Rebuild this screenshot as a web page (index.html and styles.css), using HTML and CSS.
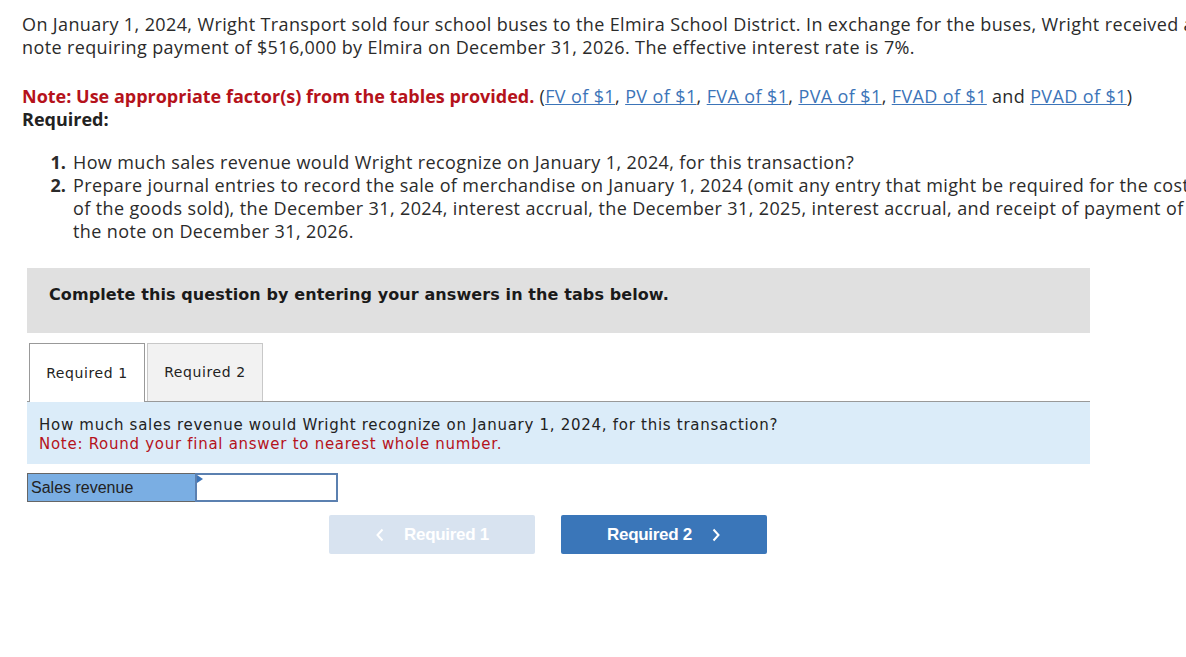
FILE: index.html
```html
<!DOCTYPE html>
<html>
<head>
<meta charset="utf-8">
<link rel="stylesheet" href="styles.css">
</head>
<body>
<div class="page">
  <p class="intro">On January 1, 2024, Wright Transport sold four school buses to the Elmira School District. In exchange for the buses, Wright received a note requiring payment of $516,000 by Elmira on December 31, 2026. The effective interest rate is 7%.</p>
  <p class="note"><span class="red">Note: Use appropriate factor(s) from the tables provided.</span> (<a href="#">FV of $1</a>, <a href="#">PV of $1</a>, <a href="#">FVA of $1</a>, <a href="#">PVA of $1</a>, <a href="#">FVAD of $1</a> and <a href="#">PVAD of $1</a>)<br><b>Required:</b></p>
  <ol class="reqs">
    <li><span class="num">1.</span><span>How much sales revenue would Wright recognize on January 1, 2024, for this transaction?</span></li>
    <li><span class="num">2.</span><span>Prepare journal entries to record the sale of merchandise on January 1, 2024 (omit any entry that might be required for the cost of the goods sold), the December 31, 2024, interest accrual, the December 31, 2025, interest accrual, and receipt of payment of the note on December 31, 2026.</span></li>
  </ol>
  <div class="widget">
    <div class="banner">Complete this question by entering your answers in the tabs below.</div>
    <div class="tabs">
      <div class="tab active">Required 1</div>
      <div class="tab">Required 2</div>
    </div>
    <div class="panel">
      <div>How much sales revenue would Wright recognize on January 1, 2024, for this transaction?</div>
      <div class="pnote">Note: Round your final answer to nearest whole number.</div>
    </div>
    <div class="answer">
      <div class="label">Sales revenue</div>
      <div class="input"></div>
    </div>
    <div class="nav">
      <button class="btn prev"><svg width="10" height="14" viewBox="0 0 10 14"><path d="M7.5 1.5 L2.5 7 L7.5 12.5" fill="none" stroke="#fff" stroke-width="2"/></svg>Required 1</button>
      <button class="btn next">Required 2<svg width="10" height="14" viewBox="0 0 10 14"><path d="M2.5 1.5 L7.5 7 L2.5 12.5" fill="none" stroke="#fff" stroke-width="2"/></svg></button>
    </div>
  </div>
</div>
</body>
</html>
```
FILE: styles.css
```css
html, body { margin: 0; padding: 0; background: #fff; overflow: hidden; }
.page {
  width: 1176px;
  padding: 13px 0 0 22px;
  font-family: "Open Sans", "Lato", sans-serif;
  font-size: 18px;
  line-height: 23px;
  color: #2b2b2b;
  letter-spacing: 0.38px;
}
.intro { margin: 0 0 26px; }
.note { margin: 0; }
.red { color: #b5121b; font-weight: bold; letter-spacing: 0; }
.note a { color: #3c74b8; text-decoration: underline; }
.note b { color: #222; letter-spacing: 0; }
.reqs { list-style: none; margin: 20px 0 0; padding: 0 0 0 22px; }
.reqs li { display: flex; }
.reqs .num { font-weight: bold; width: 22px; flex: none; text-align: right; margin-right: 7px; letter-spacing: 0; }
.widget { width: 1063px; margin: 25px 0 0 5px; font-family: "DejaVu Sans", Verdana, sans-serif; letter-spacing: 0; }
.banner {
  background: #e0e0e0;
  height: 65px;
  box-sizing: border-box;
  padding: 17px 0 0 22px;
  font-weight: bold; font-size: 16px; line-height: 20px; color: #1a1a1a;
  letter-spacing: 0.1px;
}
.tabs { display: flex; gap: 2px; margin-top: 10px; padding-left: 2px; border-bottom: 1px solid #999; height: 58px; }
.tab {
  width: 114px; height: 57px;
  border: 1px solid #c8c8c8; border-bottom: none;
  background: #f2f2f2;
  display: flex; align-items: center; justify-content: center;
  font-size: 14px; color: #222; letter-spacing: 0.6px;
}
.tab.active { background: #fff; border-color: #999; height: 58px; margin-bottom: -1px; }
.panel { background: #dbecf9; padding: 14px 12px 10px; font-size: 15px; line-height: 19px; color: #222; letter-spacing: 0.72px; }
.pnote { color: #b5121b; }
.answer { display: flex; margin-top: 9px; height: 29px; }
.label {
  width: 164px; background: #7aaee3; border: 1px solid #666; border-right: none;
  font-family: "Liberation Sans", Arial, sans-serif; font-size: 16px; color: #222;
  display: flex; align-items: center; padding-left: 3px;
}
.input { width: 139px; border: 2px solid #5b80b0; background: #fff; position: relative; box-shadow: inset 0 0 0 1px #fff; }
.input::before { content: ""; position: absolute; left: 0; top: 0; border-left: 6px solid #3c74b8; border-top: 4px solid transparent; border-bottom: 4px solid transparent; }
.nav { display: flex; gap: 26px; margin: 13px 0 0 302px; }
.btn {
  width: 206px; height: 39px; border: none; border-radius: 2px;
  font-family: "Liberation Sans", Arial, sans-serif; font-weight: bold; font-size: 17px; color: #fff;
  display: flex; align-items: center; justify-content: center; gap: 19px; letter-spacing: -0.3px;
}
.btn.prev { background: #d8e3f0; }
.btn.next { background: #3a76b9; }
```
